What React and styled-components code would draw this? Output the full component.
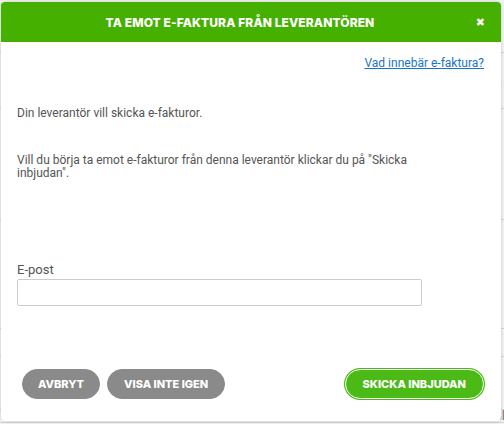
import styled, { createGlobalStyle } from 'styled-components';

const GlobalStyle = createGlobalStyle`
  html, body {
    margin: 0;
    padding: 0;
    height: 100%;
    background: #f4f4f4;
    font-family: Roboto, "Liberation Sans", Arial, sans-serif;
    overflow: hidden;
  }
`;

const Page = styled.div`
  position: relative;
  width: 504px;
  height: 424px;
  background: #f4f4f4;
  overflow: hidden;
`;

// the page behind the overlay, only its right and bottom edge show
const BackRow = styled.div`
  height: ${(p) => p.h}px;
  border-bottom: 1px solid #d6d6d6;
  padding-left: 494px;
  font-size: 13px;
  color: #777;
  line-height: ${(p) => p.h}px;
`;

const Modal = styled.div`
  position: absolute;
  left: 1px;
  top: 2px;
  width: 500px;
  height: 419px;
  background: #fff;
  border-radius: 4px;
  box-shadow: 0 0 4px rgba(0, 0, 0, 0.18);
  display: flex;
  flex-direction: column;
  overflow: hidden;
`;

const Header = styled.div`
  height: 40px;
  background: #45b000;
  display: flex;
  align-items: center;
  justify-content: center;
  position: relative;
  padding-right: 22px;
  color: #fff;
`;

const Title = styled.h2`
  margin: 0;
  font-family: Inter, "DejaVu Sans", sans-serif;
  font-weight: 800;
  font-size: 12px;
  letter-spacing: 0.1px;
`;

const Close = styled.span`
  position: absolute;
  right: 16px;
  top: 13px;
  font-family: "DejaVu Sans", sans-serif;
  font-weight: 700;
  font-size: 11px;
  line-height: 16px;
`;

const Body = styled.div`
  flex: 1;
  display: flex;
  flex-direction: column;
  padding: 14px 17px 22px 16px;
`;

const HelpLink = styled.a`
  align-self: flex-end;
  color: #1a75c8;
  text-decoration: underline;
  font-size: 12px;
  line-height: 14px;
  cursor: pointer;
`;

const Text = styled.p`
  margin: ${(p) => p.mt}px 0 0 0;
  width: 405px;
  color: #555;
  font-size: 12px;
  line-height: 13px;
`;

const Field = styled.div`
  margin-top: 82px;
  display: flex;
  flex-direction: column;
  gap: 1px;
`;

const Label = styled.label`
  color: #555;
  font-size: 13px;
  line-height: 16px;
`;

const Input = styled.input`
  box-sizing: border-box;
  width: 405px;
  height: 27px;
  border: 1px solid #ccc;
  border-radius: 2px;
  padding: 0 8px;
  font-family: inherit;
`;

const Footer = styled.div`
  margin-top: auto;
  display: flex;
  align-items: center;
  gap: 7px;
  padding: 0 0 0 5px;
`;

const Button = styled.button`
  height: 30px;
  padding: 0 ${(p) => p.px}px;
  border-radius: 15px;
  font-family: Inter, "DejaVu Sans", sans-serif;
  font-weight: 800;
  font-size: 11px;
  color: #fff;
  cursor: pointer;
  border: 1px solid ${(p) => (p.primary ? '#fff' : '#8a8a8a')};
  background: ${(p) => (p.primary ? '#4cba16' : '#8a8a8a')};
  box-shadow: ${(p) => (p.primary ? '0 0 0 1px #4cba16' : 'none')};
  margin-left: ${(p) => (p.primary ? 'auto' : '0')};
`;

export default function App() {
  return (
    <Page>
      <GlobalStyle />
      <BackRow h={52}>c</BackRow>
      <BackRow h={55}>b</BackRow>
      <BackRow h={110} />
      <BackRow h={108} />
      <BackRow h={27} />
      <BackRow h={52}>n</BackRow>
      <BackRow h={12}>Sl</BackRow>
      <Modal>
        <Header>
          <Title>TA EMOT E-FAKTURA FRÅN LEVERANTÖREN</Title>
          <Close>✖</Close>
        </Header>
        <Body>
          <HelpLink>Vad innebär e-faktura?</HelpLink>
          <Text mt={37}>Din leverantör vill skicka e-fakturor.</Text>
          <Text mt={34}>
            Vill du börja ta emot e-fakturor från denna leverantör klickar du på "Skicka inbjudan".
          </Text>
          <Field>
            <Label>E-post</Label>
            <Input type="text" />
          </Field>
          <Footer>
            <Button px={15}>AVBRYT</Button>
            <Button px={16}>VISA INTE IGEN</Button>
            <Button primary px={17}>SKICKA INBJUDAN</Button>
          </Footer>
        </Body>
      </Modal>
    </Page>
  );
}
